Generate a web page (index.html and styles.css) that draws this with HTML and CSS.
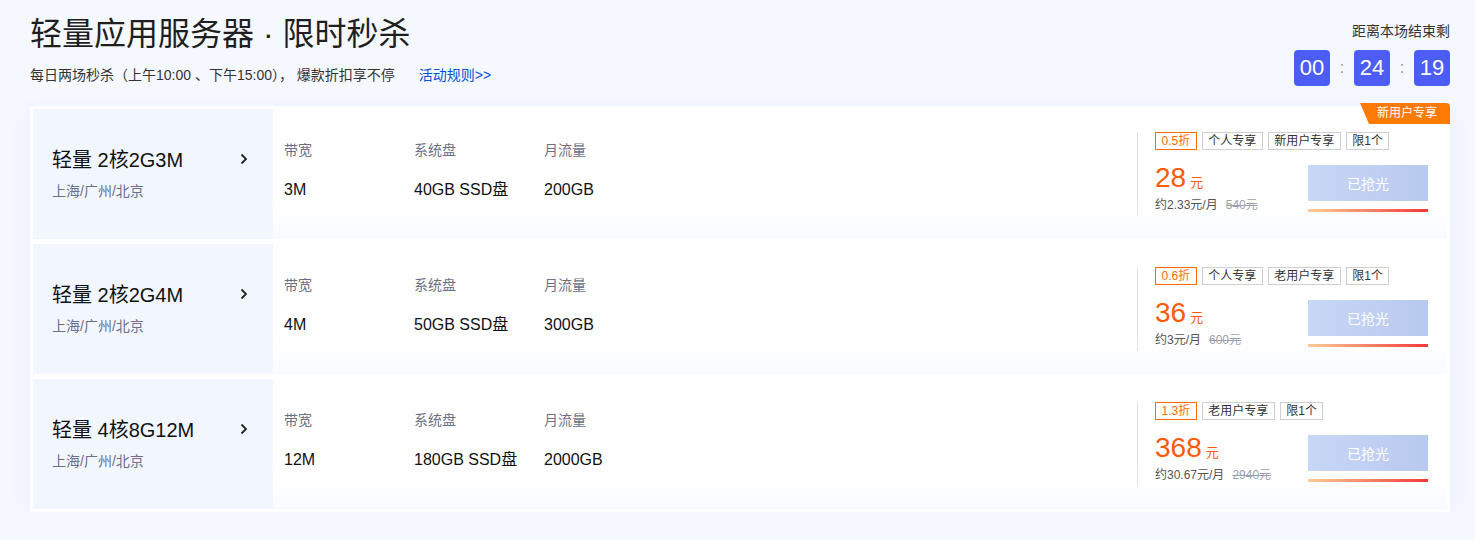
FILE: index.html
```html
<!DOCTYPE html>
<html lang="zh-CN">
<head>
    <meta charset="UTF-8">
    <title>轻量应用服务器 · 限时秒杀</title>
    <link rel="stylesheet" href="styles.css">
</head>
<body>
    <div class="page">
        <div class="header">
            <div class="intro">
                <h1 class="title">轻量应用服务器 · 限时秒杀</h1>
                <div class="desc">每日两场秒杀（上午10:00 、下午15:00）， 爆款折扣享不停<a class="rules" href="#">活动规则&gt;&gt;</a></div>
            </div>
            <div class="countdown">
                <div class="countdown-label">距离本场结束剩</div>
                <div class="timer">
                    <span class="digit">00</span><span class="colon">:</span>
                    <span class="digit">24</span><span class="colon">:</span>
                    <span class="digit">19</span>
                </div>
            </div>
        </div>

        <div class="card">
            <div class="badge">新用户专享</div>

            <!-- 2核2G3M -->
            <div class="row">
                <div class="product">
                    <div class="product-name">轻量 2核2G3M</div>
                    <div class="product-region">上海/广州/北京</div>
                    <svg class="chevron" width="10" height="12" viewBox="0 0 10 12"><path d="M2.5 1.5 L7 6 L2.5 10.5" fill="none" stroke="#222" stroke-width="1.8"/></svg>
                </div>
                <div class="specs">
                    <div class="spec"><div class="spec-label">带宽</div><div class="spec-value">3M</div></div>
                    <div class="spec"><div class="spec-label">系统盘</div><div class="spec-value">40GB SSD盘</div></div>
                    <div class="spec"><div class="spec-label">月流量</div><div class="spec-value">200GB</div></div>
                </div>
                <div class="buy">
                    <div class="tags">
                        <span class="tag tag-off">0.5折</span>
                        <span class="tag">个人专享</span>
                        <span class="tag">新用户专享</span>
                        <span class="tag">限1个</span>
                    </div>
                    <div class="buy-main">
                        <div class="price-box">
                            <div class="price"><span class="price-num">28</span><span class="price-unit">元</span></div>
                            <div class="price-sub">约2.33元/月<span class="price-old">540元</span></div>
                        </div>
                        <div class="action">
                            <button class="btn" disabled>已抢光</button>
                            <div class="bar"></div>
                        </div>
                    </div>
                </div>
            </div>

            <!-- 2核2G4M -->
            <div class="row">
                <div class="product">
                    <div class="product-name">轻量 2核2G4M</div>
                    <div class="product-region">上海/广州/北京</div>
                    <svg class="chevron" width="10" height="12" viewBox="0 0 10 12"><path d="M2.5 1.5 L7 6 L2.5 10.5" fill="none" stroke="#222" stroke-width="1.8"/></svg>
                </div>
                <div class="specs">
                    <div class="spec"><div class="spec-label">带宽</div><div class="spec-value">4M</div></div>
                    <div class="spec"><div class="spec-label">系统盘</div><div class="spec-value">50GB SSD盘</div></div>
                    <div class="spec"><div class="spec-label">月流量</div><div class="spec-value">300GB</div></div>
                </div>
                <div class="buy">
                    <div class="tags">
                        <span class="tag tag-off">0.6折</span>
                        <span class="tag">个人专享</span>
                        <span class="tag">老用户专享</span>
                        <span class="tag">限1个</span>
                    </div>
                    <div class="buy-main">
                        <div class="price-box">
                            <div class="price"><span class="price-num">36</span><span class="price-unit">元</span></div>
                            <div class="price-sub">约3元/月<span class="price-old">600元</span></div>
                        </div>
                        <div class="action">
                            <button class="btn" disabled>已抢光</button>
                            <div class="bar"></div>
                        </div>
                    </div>
                </div>
            </div>

            <!-- 4核8G12M -->
            <div class="row">
                <div class="product">
                    <div class="product-name">轻量 4核8G12M</div>
                    <div class="product-region">上海/广州/北京</div>
                    <svg class="chevron" width="10" height="12" viewBox="0 0 10 12"><path d="M2.5 1.5 L7 6 L2.5 10.5" fill="none" stroke="#222" stroke-width="1.8"/></svg>
                </div>
                <div class="specs">
                    <div class="spec"><div class="spec-label">带宽</div><div class="spec-value">12M</div></div>
                    <div class="spec"><div class="spec-label">系统盘</div><div class="spec-value">180GB SSD盘</div></div>
                    <div class="spec"><div class="spec-label">月流量</div><div class="spec-value">2000GB</div></div>
                </div>
                <div class="buy">
                    <div class="tags">
                        <span class="tag tag-off">1.3折</span>
                        <span class="tag">老用户专享</span>
                        <span class="tag">限1个</span>
                    </div>
                    <div class="buy-main">
                        <div class="price-box">
                            <div class="price"><span class="price-num">368</span><span class="price-unit">元</span></div>
                            <div class="price-sub">约30.67元/月<span class="price-old">2940元</span></div>
                        </div>
                        <div class="action">
                            <button class="btn" disabled>已抢光</button>
                            <div class="bar"></div>
                        </div>
                    </div>
                </div>
            </div>
        </div>
    </div>
</body>
</html>
```

FILE: styles.css
```css
body {
    margin: 0;
    background: #f5f8fe;
    font-family: "Liberation Sans", "Noto Sans CJK SC", sans-serif;
    color: #222;
}
.page {
    padding: 14px 25px 0 30px;
}
.header {
    display: flex;
    justify-content: space-between;
    align-items: flex-start;
}
.title {
    margin: 0;
    font-size: 32px;
    line-height: 40px;
    font-weight: normal;
    color: #1f1f1f;
}
.desc {
    margin-top: 11px;
    font-size: 14px;
    line-height: 20px;
    color: #333;
}
.rules {
    margin-left: 24px;
    color: #0052d9;
    text-decoration: none;
}
.countdown {
    display: flex;
    flex-direction: column;
    align-items: flex-end;
    padding-top: 7px;
}
.countdown-label {
    font-size: 14px;
    line-height: 20px;
    color: #333;
}
.timer {
    display: flex;
    align-items: center;
    margin-top: 9px;
}
.digit {
    width: 36px;
    height: 36px;
    line-height: 36px;
    text-align: center;
    background: #4c5df6;
    color: #fff;
    font-size: 22px;
    border-radius: 4px;
}
.colon {
    width: 24px;
    text-align: center;
    color: #999;
    font-size: 16px;
}
.card {
    position: relative;
    margin-top: 20px;
    background: #fff;
    padding: 3px;
    display: flex;
    flex-direction: column;
    gap: 5px;
    box-shadow: 0 4px 18px rgba(90, 110, 200, 0.08);
}
.badge {
    position: absolute;
    top: -3px;
    right: 0;
    width: 90px;
    height: 21px;
    line-height: 21px;
    padding-left: 4px;
    box-sizing: border-box;
    text-align: center;
    font-size: 12px;
    color: #fff;
    background: #ff7a05;
    border-top-right-radius: 4px;
    clip-path: polygon(0 0, 100% 0, 100% 100%, 9px 100%);
}
.row {
    display: flex;
    height: 130px;
    background: linear-gradient(#ffffff 70%, #fafbfe);
}
.product {
    position: relative;
    width: 240px;
    box-sizing: border-box;
    padding: 38px 0 0 19px;
    background: #f2f6ff;
}
.product-name {
    font-size: 20px;
    line-height: 26px;
    color: #111;
}
.product-region {
    margin-top: 9px;
    font-size: 14px;
    line-height: 18px;
    color: #697089;
}
.chevron {
    position: absolute;
    left: 206px;
    top: 44px;
}
.specs {
    flex: 1;
    display: flex;
    padding: 31px 0 0 11px;
}
.spec {
    width: 130px;
}
.spec-label {
    font-size: 14px;
    line-height: 20px;
    color: #6a7186;
}
.spec-value {
    margin-top: 20px;
    font-size: 16px;
    line-height: 20px;
    color: #111;
}
.buy {
    width: 310px;
    box-sizing: border-box;
    margin-top: 23px;
    align-self: flex-start;
    padding: 0 19px 2px 17px;
    border-left: 1px solid #e3e3e3;
}
.tags {
    display: flex;
    gap: 5px;
}
.tag {
    height: 18px;
    line-height: 16px;
    box-sizing: border-box;
    padding: 0 5.5px;
    border: 1px solid #cfcfcf;
    font-size: 12px;
    color: #333;
}
.tag-off {
    border-color: #ff6a00;
    color: #ff6a00;
}
.buy-main {
    display: flex;
    justify-content: space-between;
    margin-top: 12px;
}
.price {
    height: 32px;
    display: flex;
    align-items: baseline;
    color: #ff5a0a;
}
.price-num {
    font-size: 28px;
    line-height: 32px;
}
.price-unit {
    margin-left: 4px;
    font-size: 13px;
}
.price-sub {
    margin-top: 2px;
    font-size: 12px;
    line-height: 18px;
    color: #555;
}
.price-old {
    margin-left: 8px;
    color: #9aa0b0;
    text-decoration: line-through;
}
.action {
    padding-top: 3px;
}
.btn {
    display: block;
    width: 120px;
    height: 36px;
    border: none;
    background: linear-gradient(90deg, #c9d7f6, #b8c9ef);
    color: #fff;
    font-family: inherit;
    font-size: 14px;
}
.bar {
    margin-top: 8px;
    width: 120px;
    height: 3px;
    background: linear-gradient(90deg, #fdcc98, #f2393b);
}
```
